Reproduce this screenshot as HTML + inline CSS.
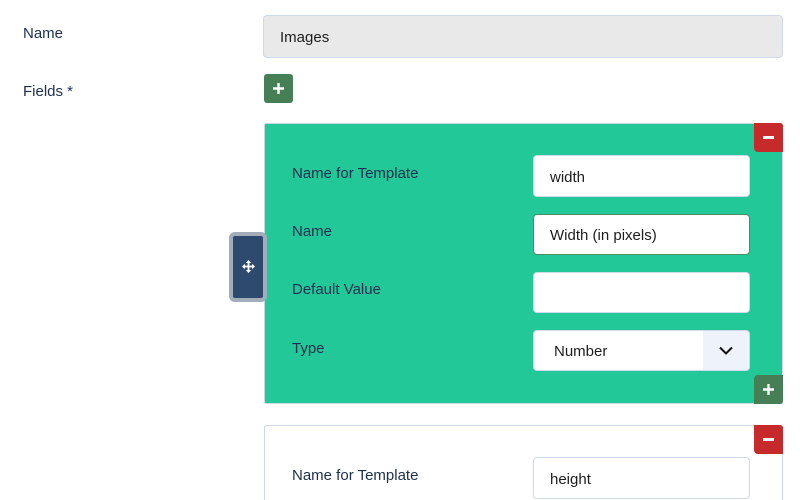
<!DOCTYPE html>
<html><head><meta charset="utf-8"><style>
html,body{margin:0;width:800px;height:500px;overflow:hidden}
body{background:#fff;font-family:"Liberation Sans",sans-serif;position:relative}
.a{position:absolute}
.lbl{color:#1c2f4f;font-size:15px}
.inp{position:absolute;box-sizing:border-box;background:#fff;border:1px solid #cfd9ea;border-radius:4px;font-size:15px;color:#1d1d1d;padding-left:16px;padding-top:2px;display:flex;align-items:center}
.btn{position:absolute;display:flex;align-items:center;justify-content:center;color:#fff;border-radius:3px}
</style></head><body>
<div class="a lbl" style="left:23px;top:25px">Name</div>
<div class="inp" style="left:263px;top:15px;width:520px;height:43px;background:#e9e9e9;">Images</div>
<div class="a lbl" style="left:23px;top:83px">Fields *</div>
<div class="btn" style="left:264px;top:74px;width:29px;height:29px;background:#467e56"><svg width="11" height="11" viewBox="0 0 11 11"><path d="M5.5 0V11M0 5.5H11" stroke="#fff" stroke-width="2.4"/></svg></div>

<div class="a" style="left:264px;top:123px;width:517px;height:279px;border:1px solid #cdd6e4;background:#23c898;border-radius:2px"></div>
<div class="btn" style="left:754px;top:123px;width:29px;height:29px;background:#c62a2a;border-radius:0 3px 0 4px"><div style="width:11px;height:3px;background:#fff"></div></div>
<div class="btn" style="left:754px;top:375px;width:29px;height:29px;background:#467e56;border-radius:4px 0 3px 0"><svg width="11" height="11" viewBox="0 0 11 11"><path d="M5.5 0V11M0 5.5H11" stroke="#fff" stroke-width="2.4"/></svg></div>

<div class="a lbl" style="left:292px;top:165px">Name for Template</div>
<div class="inp" style="left:533px;top:155px;width:217px;height:42px">width</div>
<div class="a lbl" style="left:292px;top:223px">Name</div>
<div class="inp" style="left:533px;top:214px;width:217px;height:41px;border-color:#4e8a64">Width (in pixels)</div>
<div class="a lbl" style="left:292px;top:281px">Default Value</div>
<div class="inp" style="left:533px;top:272px;width:217px;height:41px"></div>
<div class="a lbl" style="left:292px;top:340px">Type</div>
<div class="inp" style="left:533px;top:330px;width:217px;height:41px;padding-left:20px">Number
  <div class="a" style="right:0;top:0;width:46px;height:39px;background:#eef2fa;border-radius:0 4px 4px 0;display:flex;align-items:center;justify-content:center">
   <svg width="14" height="9" viewBox="0 0 14 9"><path d="M1 1.5 L7 7.5 L13 1.5" fill="none" stroke="#111" stroke-width="2"/></svg>
  </div>
</div>

<div class="a" style="left:229px;top:232px;width:38px;height:70px;box-sizing:border-box;border:4px solid #a3acb9;border-radius:6px;background:#2e4a6f"></div>
<svg class="a" style="left:242px;top:260px" width="13" height="13" viewBox="0 0 13 13"><path d="M6.5 2V11M2 6.5H11" stroke="#fff" stroke-width="1.8"/><path d="M6.5 0L3.8 3H9.2ZM6.5 13L3.8 10H9.2ZM0 6.5L3 3.8V9.2ZM13 6.5L10 3.8V9.2Z" fill="#fff"/></svg>

<div class="a" style="left:264px;top:425px;width:517px;height:76px;border:1px solid #cdd6e4;border-bottom:none;background:#fff;border-radius:3px 3px 0 0;box-sizing:border-box;width:519px"></div>
<div class="btn" style="left:754px;top:425px;width:29px;height:29px;background:#c62a2a;border-radius:0 3px 0 4px"><div style="width:11px;height:3px;background:#fff"></div></div>
<div class="a lbl" style="left:292px;top:467px">Name for Template</div>
<div class="inp" style="left:533px;top:457px;width:217px;height:42px">height</div>
</body></html>
